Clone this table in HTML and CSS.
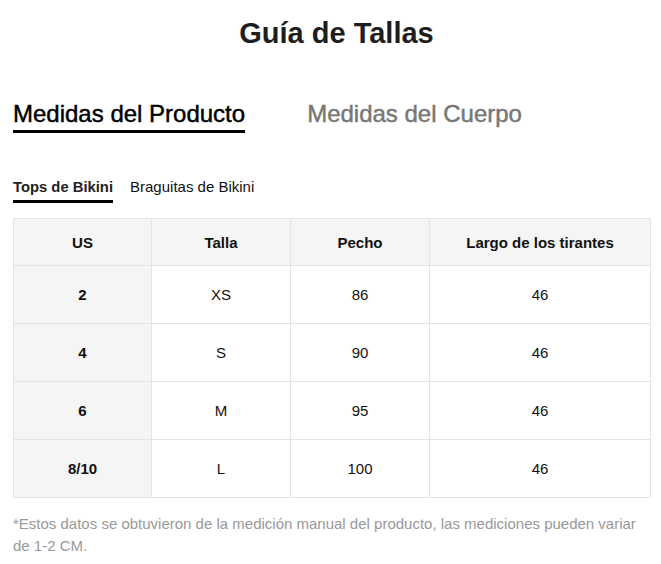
FILE: index.html
```html
<!DOCTYPE html>
<html lang="es">
<head>
<meta charset="utf-8">
<title>Guía de Tallas</title>
<link rel="stylesheet" href="styles.css">
</head>
<body>
<div class="page">
  <h1 class="title">Guía de Tallas</h1>
  <div class="tabs">
    <div class="tab tab-active">Medidas del Producto</div>
    <div class="tab">Medidas del Cuerpo</div>
  </div>
  <div class="subtabs">
    <div class="subtab subtab-active">Tops de Bikini</div>
    <div class="subtab">Braguitas de Bikini</div>
  </div>
  <table class="size-table">
    <colgroup>
      <col class="c1"><col class="c2"><col class="c3"><col class="c4">
    </colgroup>
    <thead>
      <tr><th>US</th><th>Talla</th><th>Pecho</th><th>Largo de los tirantes</th></tr>
    </thead>
    <tbody>
      <tr><th>2</th><td>XS</td><td>86</td><td>46</td></tr>
      <tr><th>4</th><td>S</td><td>90</td><td>46</td></tr>
      <tr><th>6</th><td>M</td><td>95</td><td>46</td></tr>
      <tr><th>8/10</th><td>L</td><td>100</td><td>46</td></tr>
    </tbody>
  </table>
  <p class="note">*Estos datos se obtuvieron de la medición manual del producto, las mediciones pueden variar de 1-2 CM.</p>
</div>
</body>
</html>
```

FILE: styles.css
```css
html, body {
  margin: 0;
  padding: 0;
  background: #fff;
}
body {
  font-family: "Liberation Sans", Arial, sans-serif;
  color: #222;
}
.page {
  padding: 0 11px 0 13px;
}
.title {
  margin: 0;
  padding: 16px 0 0 10px;
  height: 34px;
  line-height: 34px;
  font-size: 29px;
  font-weight: 700;
  text-align: center;
  color: #1e1e1e;
}
.tabs {
  display: flex;
  gap: 62px;
  margin-top: 50px;
}
.tab {
  font-size: 24px;
  line-height: 28px;
  color: #777;
  -webkit-text-stroke: 0.45px currentColor;
  padding-bottom: 2px;
  border-bottom: 3px solid transparent;
}
.tab-active {
  color: #000;
  border-bottom-color: #000;
}
.subtabs {
  display: flex;
  gap: 17px;
  margin-top: 45px;
}
.subtab {
  font-size: 15px;
  line-height: 18px;
  color: #111;
  padding-bottom: 4px;
  border-bottom: 3px solid transparent;
}
.subtab-active {
  font-size: 14.8px;
  font-weight: 700;
  color: #222;
  border-bottom-color: #000;
}
.size-table {
  margin-top: 15px;
  width: 637px;
  border-collapse: collapse;
  table-layout: fixed;
  font-size: 15px;
  color: #111;
}
.c1 { width: 138px; }
.c2 { width: 139px; }
.c3 { width: 139px; }
.c4 { width: 221px; }
.size-table th,
.size-table td {
  border: 1px solid #e4e4e4;
  text-align: center;
  padding: 0;
}
.size-table thead th {
  height: 46px;
  background: #f5f5f5;
  font-weight: 700;
}
.size-table tbody th {
  background: #f5f5f5;
  font-weight: 700;
}
.size-table tbody th,
.size-table tbody td {
  height: 57px;
}
.note {
  margin: 15px 0 0;
  font-size: 15px;
  line-height: 22px;
  color: #999;
}
```
